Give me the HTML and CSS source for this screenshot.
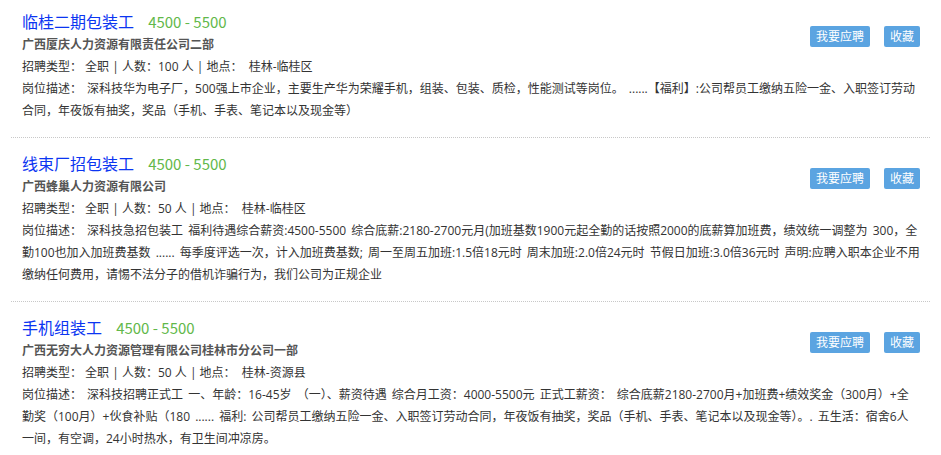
FILE: index.html
```html
<!DOCTYPE html>
<html lang="zh-CN">
<head>
    <meta charset="UTF-8">
    <title>招聘信息</title>
    <link rel="stylesheet" href="styles.css">
</head>
<body>

<div class="job-list">
    <div class="job-item">
        <div class="job-actions">
            <a class="btn">我要应聘</a>
            <a class="btn">收藏</a>
        </div>
        <div class="job-title">
            <a class="job-name">临桂二期包装工</a>
            <span class="job-salary">4500 - 5500</span>
        </div>
        <div class="job-company">广西厦庆人力资源有限责任公司二部</div>
        <div class="job-info">招聘类型：&nbsp;全职 | 人数：100 人 | 地点：&nbsp; 桂林-临桂区</div>
        <div class="job-desc">岗位描述：&nbsp;深科技华为电子厂，500强上市企业，主要生产华为荣耀手机，组装、包装、质检，性能测试等岗位。 ......【福利】:公司帮员工缴纳五险一金、入职签订劳动合同，年夜饭有抽奖，奖品（手机、手表、笔记本以及现金等）</div>
    </div>

    <div class="job-item">
        <div class="job-actions">
            <a class="btn">我要应聘</a>
            <a class="btn">收藏</a>
        </div>
        <div class="job-title">
            <a class="job-name">线束厂招包装工</a>
            <span class="job-salary">4500 - 5500</span>
        </div>
        <div class="job-company">广西蜂巢人力资源有限公司</div>
        <div class="job-info">招聘类型：&nbsp;全职 | 人数：50 人 | 地点：&nbsp; 桂林-临桂区</div>
        <div class="job-desc">岗位描述：&nbsp;深科技急招包装工 福利待遇综合薪资:4500-5500 综合底薪:2180-2700元月(加班基数1900元起全勤的话按照2000的底薪算加班费，绩效统一调整为 300，全勤100也加入加班费基数 ...... 每季度评选一次，计入加班费基数; 周一至周五加班:1.5倍18元时 周末加班:2.0倍24元时 节假日加班:3.0倍36元时 声明:应聘入职本企业不用缴纳任何费用，请惕不法分子的借机诈骗行为，我们公司为正规企业</div>
    </div>

    <div class="job-item">
        <div class="job-actions">
            <a class="btn">我要应聘</a>
            <a class="btn">收藏</a>
        </div>
        <div class="job-title">
            <a class="job-name">手机组装工</a>
            <span class="job-salary">4500 - 5500</span>
        </div>
        <div class="job-company">广西无穷大人力资源管理有限公司桂林市分公司一部</div>
        <div class="job-info">招聘类型：&nbsp;全职 | 人数：50 人 | 地点：&nbsp; 桂林-资源县</div>
        <div class="job-desc">岗位描述：&nbsp;深科技招聘正式工 一、年龄：16-45岁 （一）、薪资待遇 综合月工资：4000-5500元 正式工薪资： 综合底薪2180-2700月+加班费+绩效奖金（300月）+全勤奖（100月）+伙食补贴（180 ...... 福利: 公司帮员工缴纳五险一金、入职签订劳动合同，年夜饭有抽奖，奖品（手机、手表、笔记本以及现金等）。. 五生活：宿舍6人一间，有空调，24小时热水，有卫生间冲凉房。</div>
    </div>
</div>

</body>
</html>
```

FILE: styles.css
```css
body {
    margin: 0;
    background: #fff;
    font-family: "Open Sans", "Noto Sans CJK SC", sans-serif;
    font-size: 12px;
    color: #333;
}

.job-list {
    margin: 0 11px;
}

.job-item {
    padding: 14px 10px 15px 11px;
    border-bottom: 1px dotted #c8c8c8;
}

.job-item:first-child {
    padding-top: 10px;
}

.job-item:last-child {
    border-bottom: none;
}

.job-actions {
    float: right;
    margin-top: 16px;
    display: flex;
    gap: 14px;
}

.btn {
    display: block;
    height: 21px;
    line-height: 21px;
    padding: 0 6px;
    background: #5ba4e1;
    color: #fff;
    border-radius: 2px;
    font-size: 12px;
    cursor: pointer;
}

.job-title {
    height: 24px;
    line-height: 24px;
}

.job-name {
    font-size: 16px;
    color: #0b35f2;
    cursor: pointer;
}

.job-salary {
    margin-left: 11px;
    font-family: "Noto Sans CJK SC", sans-serif;
    font-size: 15px;
    color: #62b84a;
}

.job-company {
    line-height: 22px;
    font-weight: bold;
    color: #555;
}

.job-info,
.job-desc {
    line-height: 22px;
    color: #333;
}

.job-desc {
    word-spacing: 2px;
}
```
